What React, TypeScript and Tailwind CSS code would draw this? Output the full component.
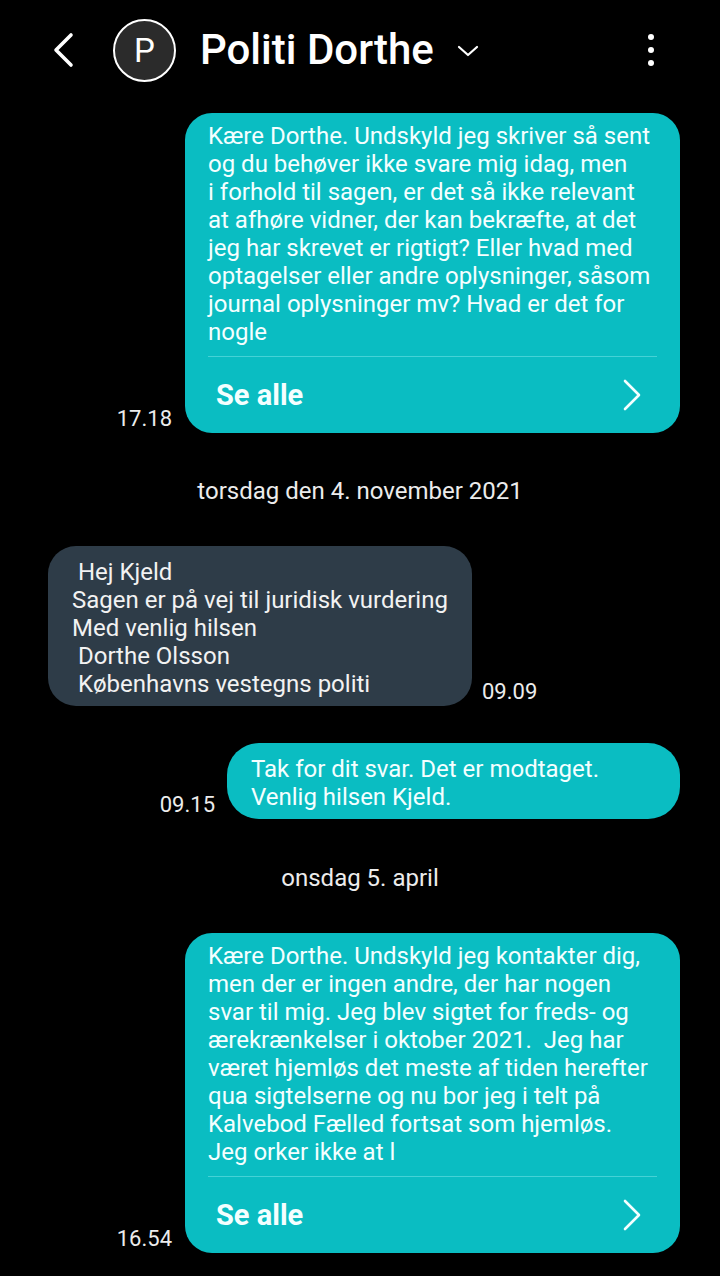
import React from "react";

const font = { fontFamily: "Roboto, 'Noto Sans', sans-serif" };

function Header() {
  return (
    <div className="flex h-[100px] items-center pl-[51px] pr-[66px]">
      <svg width="26" height="36" viewBox="0 0 26 36" fill="none">
        <path d="M20 3 L5 18 L20 33" stroke="white" strokeWidth="3.6" strokeLinecap="round" strokeLinejoin="round" />
      </svg>
      <div className="ml-[36px] flex h-[63px] w-[63px] items-center justify-center rounded-full border-2 border-white bg-[#2b2b2b] text-[33px] leading-none text-white">
        P
      </div>
      <div className="ml-[24px] text-[42px] font-medium leading-none text-white">Politi Dorthe</div>
      <svg className="ml-[23px] mt-[2px]" width="22" height="12" viewBox="0 0 22 12" fill="none">
        <path d="M2 2 L11 10 L20 2" stroke="white" strokeWidth="2.2" strokeLinecap="round" strokeLinejoin="round" />
      </svg>
      <div className="ml-auto flex flex-col items-center gap-[7px]">
        <span className="h-[6px] w-[6px] rounded-full bg-white" />
        <span className="h-[6px] w-[6px] rounded-full bg-white" />
        <span className="h-[6px] w-[6px] rounded-full bg-white" />
      </div>
    </div>
  );
}

function Lines({ lines }: { lines: string[] }) {
  return (
    <div className="text-[24px] leading-[28px]">
      {lines.map((l, i) => (
        <div key={i} className="whitespace-pre">
          {l}
        </div>
      ))}
    </div>
  );
}

function Time({ t }: { t: string }) {
  return <div className="pb-[2px] text-[22px] leading-[24px] text-[#ececec]">{t}</div>;
}

function LongOut({ time, lines }: { time: string; lines: string[] }) {
  return (
    <div className="flex items-end justify-end gap-[13px] pr-[40px]">
      <Time t={time} />
      <div className="w-[495px] rounded-[27px] bg-[#0abdc2] text-[#f4ffff]">
        <div className="px-[23px] pt-[9px]">
          <Lines lines={lines} />
        </div>
        <div className="mx-[23px] mt-[10px] h-px bg-[#45d2d6]" />
        <div className="flex h-[76px] items-center justify-between pl-[31px] pr-[38px]">
          <span className="text-[29px] font-bold leading-none">Se alle</span>
          <svg width="20" height="32" viewBox="0 0 20 32" fill="none">
            <path d="M3 2 L17 16 L3 30" stroke="#f4ffff" strokeWidth="2.6" strokeLinecap="round" strokeLinejoin="round" />
          </svg>
        </div>
      </div>
    </div>
  );
}

function DateLabel({ text, className }: { text: string; className: string }) {
  return <div className={`text-center text-[24px] leading-[28px] text-[#ececec] ${className}`}>{text}</div>;
}

export default function App() {
  return (
    <div className="h-[1276px] w-[720px] overflow-hidden bg-black" style={font}>
      <Header />
      <div className="mt-[13px]">
        <LongOut
          time="17.18"
          lines={[
            "Kære Dorthe. Undskyld jeg skriver så sent",
            "og du behøver ikke svare mig idag, men",
            "i forhold til sagen, er det så ikke relevant",
            "at afhøre vidner, der kan bekræfte, at det",
            "jeg har skrevet er rigtigt? Eller hvad med",
            "optagelser eller andre oplysninger, såsom",
            "journal oplysninger mv? Hvad er det for",
            "nogle",
          ]}
        />
      </div>
      <DateLabel text="torsdag den 4. november 2021" className="mt-[44px] mb-[41px]" />
      <div className="flex items-end gap-[10px] pl-[48px]">
        <div className="w-[424px] rounded-[28px] bg-[#2e3c48] px-[24px] pt-[12px] pb-[8px] text-[#f2f2f2]">
          <Lines
            lines={[
              " Hej Kjeld",
              "Sagen er på vej til juridisk vurdering",
              "Med venlig hilsen",
              " Dorthe Olsson",
              " Københavns vestegns politi",
            ]}
          />
        </div>
        <Time t="09.09" />
      </div>
      <div className="mt-[37px] flex items-end justify-end gap-[12px] pr-[40px]">
        <Time t="09.15" />
        <div className="w-[453px] rounded-[32px] bg-[#0abdc2] px-[24px] pt-[12px] pb-[8px] text-[#f4ffff]">
          <Lines lines={["Tak for dit svar. Det er modtaget.", "Venlig hilsen Kjeld."]} />
        </div>
      </div>
      <DateLabel text="onsdag 5. april" className="mt-[45px] mb-[41px]" />
      <LongOut
        time="16.54"
        lines={[
          "Kære Dorthe. Undskyld jeg kontakter dig,",
          "men der er ingen andre, der har nogen",
          "svar til mig. Jeg blev sigtet for freds- og",
          "ærekrænkelser i oktober 2021.  Jeg har",
          "været hjemløs det meste af tiden herefter",
          "qua sigtelserne og nu bor jeg i telt på",
          "Kalvebod Fælled fortsat som hjemløs.",
          "Jeg orker ikke at l",
        ]}
      />
    </div>
  );
}
